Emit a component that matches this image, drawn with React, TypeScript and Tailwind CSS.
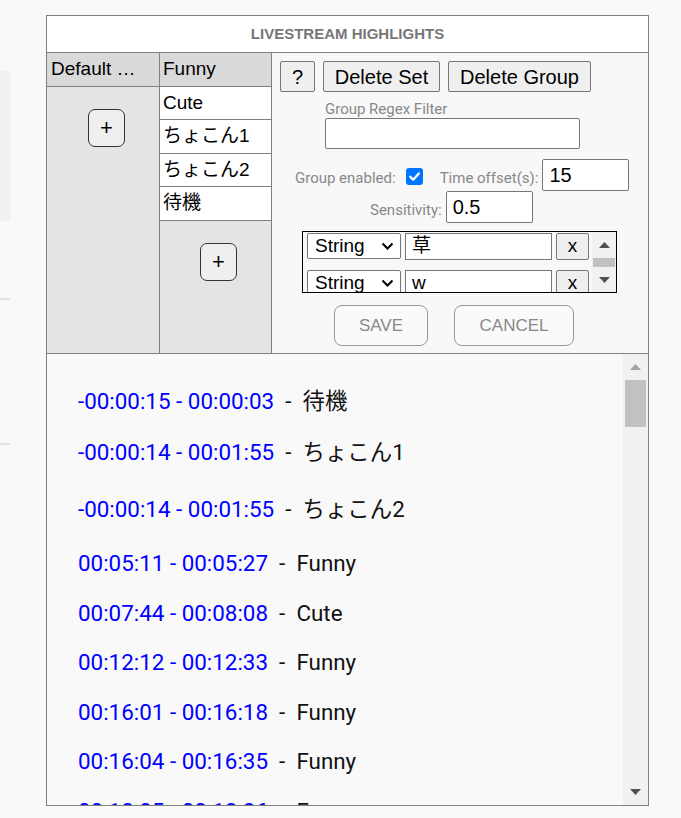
import React from 'react';

const arial = "font-['Liberation_Sans','Noto_Sans_CJK_JP',sans-serif]";
const roboto = "font-['Roboto','Noto_Sans_CJK_JP',sans-serif]";

const groups = [
  { name: 'Cute', h: 'h-[33px]' },
  { name: 'ちょこん1', h: 'h-[34px]' },
  { name: 'ちょこん2', h: 'h-[33px]' },
  { name: '待機', h: 'h-[34px]' },
];

const highlights = [
  { time: '-00:00:15 - 00:00:03', label: '待機', mt: 'mt-[34px]' },
  { time: '-00:00:14 - 00:01:55', label: 'ちょこん1', mt: 'mt-[25px]' },
  { time: '-00:00:14 - 00:01:55', label: 'ちょこん2', mt: 'mt-[31px]' },
  { time: '00:05:11 - 00:05:27', label: 'Funny', mt: 'mt-[28px]' },
  { time: '00:07:44 - 00:08:08', label: 'Cute', mt: 'mt-[24px]' },
  { time: '00:12:12 - 00:12:33', label: 'Funny', mt: 'mt-[23px]' },
  { time: '00:16:01 - 00:16:18', label: 'Funny', mt: 'mt-[24px]' },
  { time: '00:16:04 - 00:16:35', label: 'Funny', mt: 'mt-[23px]' },
  { time: '00:18:05 - 00:18:26', label: 'Funny', mt: 'mt-[24px]' },
];

const rules = [
  { type: 'String', value: '草' },
  { type: 'String', value: 'w' },
];

const Arrow = ({ up, color }: { up?: boolean; color: string }) => (
  <svg width="11" height="6" viewBox="0 0 11 6" className={color}>
    <polygon points={up ? '0,6 5.5,0 11,6' : '0,0 5.5,6 11,0'} fill="currentColor" />
  </svg>
);

const PlusButton = ({ ml }: { ml: string }) => (
  <button
    className={`${ml} mt-[22px] w-[37px] h-[38px] rounded-[7px] border border-[#333] bg-[#efefef] flex items-center justify-center text-[22px] leading-none text-black ${arial}`}
  >
    +
  </button>
);

const App = () => {
  return (
    <div className="h-[818px] w-full overflow-hidden bg-[#f9f9f9] flex">
      {/* bits of the page behind, cut off at the left */}
      <div className="w-[10px] flex flex-col">
        <div className="mt-[71px] h-[150px] bg-[#f1f1f1]" />
        <div className="mt-[77px] h-[2px] bg-[#e2e2e2]" />
        <div className="mt-[143px] h-[2px] bg-[#e2e2e2]" />
      </div>

      <div className="ml-[36px] mt-[15px] w-[603px] h-[791px] border border-[#808080] flex flex-col overflow-hidden">
        {/* Title */}
        <div className={`h-[37px] shrink-0 bg-white border-b border-[#808080] flex items-center justify-center text-[15px] font-bold text-[#777] ${arial}`}>
          LIVESTREAM HIGHLIGHTS
        </div>

        {/* Editor */}
        <div className="h-[301px] shrink-0 flex border-b border-[#808080]">
          {/* Sets */}
          <div className={`w-[113px] border-r border-[#808080] bg-[#e4e4e4] flex flex-col ${arial}`}>
            <div className="h-[34px] border-b border-[#808080] bg-[#d9d9d9] flex items-center pl-[4px] text-[19px] text-black whitespace-nowrap">
              Default …
            </div>
            <PlusButton ml="ml-[41px]" />
          </div>

          {/* Groups */}
          <div className={`w-[112px] border-r border-[#808080] bg-[#e4e4e4] flex flex-col ${arial}`}>
            <div className="h-[34px] border-b border-[#808080] bg-[#d9d9d9] flex items-center pl-[3px] text-[19px] text-black">
              Funny
            </div>
            {groups.map((g) => (
              <div
                key={g.name}
                className={`${g.h} border-b border-[#808080] bg-white flex items-center pl-[3px] text-[19px] text-black`}
              >
                {g.name}
              </div>
            ))}
            <PlusButton ml="ml-[40px]" />
          </div>

          {/* Group settings */}
          <div className="flex-1 bg-[#f8f8f8] flex flex-col">
            <div className={`flex gap-[8px] pl-[8px] pt-[8px] text-[20px] text-black ${arial}`}>
              <button className="h-[31px] w-[35px] bg-[#efefef] border border-[#767676] rounded-[2px] leading-none">?</button>
              <button className="h-[31px] w-[117px] bg-[#efefef] border border-[#767676] rounded-[2px] leading-none">Delete Set</button>
              <button className="h-[31px] w-[143px] bg-[#efefef] border border-[#767676] rounded-[2px] leading-none">Delete Group</button>
            </div>

            <div className={`ml-[53px] mt-[9px] text-[15px] leading-[17px] text-[#888] ${roboto}`}>Group Regex Filter</div>
            <div className="ml-[53px] w-[255px] h-[31px] bg-white border border-[#767676] rounded-[2px]" />

            <div className={`mt-[10px] pl-[23px] flex items-center h-[32px] text-[15px] text-[#888] ${roboto}`}>
              <span className="mt-[7px]">Group enabled:</span>
              <span className="ml-[10px] mt-[3px] w-[17px] h-[17px] rounded-[3px] bg-[#0075ff] flex items-center justify-center">
                <svg width="13" height="13" viewBox="0 0 13 13">
                  <path d="M2.2 6.8 L5.2 9.8 L10.8 3.4" stroke="white" strokeWidth="2.3" fill="none" strokeLinecap="round" strokeLinejoin="round" />
                </svg>
              </span>
              <span className="ml-[17px] mt-[7px]">Time offset(s):</span>
              <div className={`ml-[4px] w-[87px] h-[32px] bg-white border border-[#767676] rounded-[2px] flex items-center pl-[6px] text-[20px] text-black ${arial}`}>15</div>
            </div>
            <div className={`pl-[98px] flex items-center h-[32px] text-[15px] text-[#888] ${roboto}`}>
              <span className="mt-[7px]">Sensitivity:</span>
              <div className={`ml-[4px] w-[87px] h-[32px] bg-white border border-[#767676] rounded-[2px] flex items-center pl-[6px] text-[20px] text-black ${arial}`}>0.5</div>
            </div>

            {/* Rules */}
            <div className="ml-[30px] mt-[8px] w-[315px] h-[62px] border border-black flex overflow-hidden">
              <div className={`flex-1 flex flex-col gap-[10px] pl-[4px] pt-[1px] text-[19px] text-black ${arial}`}>
                {rules.map((r, i) => (
                  <div key={i} className="flex gap-[4px] h-[27px] shrink-0">
                    <div className="w-[94px] h-[26px] bg-white border border-[#767676] rounded-[2px] flex items-center justify-between pl-[7px] pr-[6px]">
                      <span>{r.type}</span>
                      <svg width="13" height="8" viewBox="0 0 13 8">
                        <polyline points="1.5,1.5 6.5,6.5 11.5,1.5" stroke="black" strokeWidth="2" fill="none" />
                      </svg>
                    </div>
                    <div className="w-[147px] h-[27px] bg-white border border-[#767676] flex items-center pl-[6px]">
                      {r.value}
                    </div>
                    <button className="w-[33px] h-[27px] bg-[#efefef] border border-[#767676] rounded-[2px] leading-none pb-[2px]">x</button>
                  </div>
                ))}
              </div>
              <div className="w-[24px] bg-[#f1f1f1] flex flex-col">
                <div className="h-[26px] flex items-center justify-center">
                  <Arrow up color="text-[#505050]" />
                </div>
                <div className="mx-[1px] h-[9px] bg-[#c1c1c1]" />
                <div className="flex-1" />
                <div className="h-[24px] flex items-center justify-center">
                  <Arrow color="text-[#505050]" />
                </div>
              </div>
            </div>

            <div className={`ml-[62px] mt-[12px] flex gap-[26px] text-[17px] text-[#888] ${arial}`}>
              <button className="w-[94px] h-[41px] bg-[#fafafa] border border-[#999] rounded-[8px]">SAVE</button>
              <button className="w-[120px] h-[41px] bg-[#fafafa] border border-[#999] rounded-[8px]">CANCEL</button>
            </div>
          </div>
        </div>

        {/* Highlight list */}
        <div className="flex-1 flex min-h-0 bg-[#f9f9f9]">
          <div className={`flex-1 pl-[31px] overflow-hidden text-[22.4px] ${roboto}`}>
            {highlights.map((h, i) => (
              <div key={i} className={`${h.mt} leading-[26px] whitespace-pre`}>
                <span className="text-[#0000ff]">{h.time}</span>
                <span className="text-[#111]">{'  -  '}{h.label}</span>
              </div>
            ))}
          </div>
          <div className="w-[25px] bg-[#f1f1f1] flex flex-col">
            <div className="h-[26px] flex items-center justify-center">
              <Arrow up color="text-[#a3a3a3]" />
            </div>
            <div className="ml-[2px] w-[21px] h-[47px] bg-[#c1c1c1]" />
            <div className="flex-1" />
            <div className="h-[26px] flex items-center justify-center">
              <Arrow color="text-[#505050]" />
            </div>
          </div>
        </div>
      </div>
    </div>
  );
};

export default App;
